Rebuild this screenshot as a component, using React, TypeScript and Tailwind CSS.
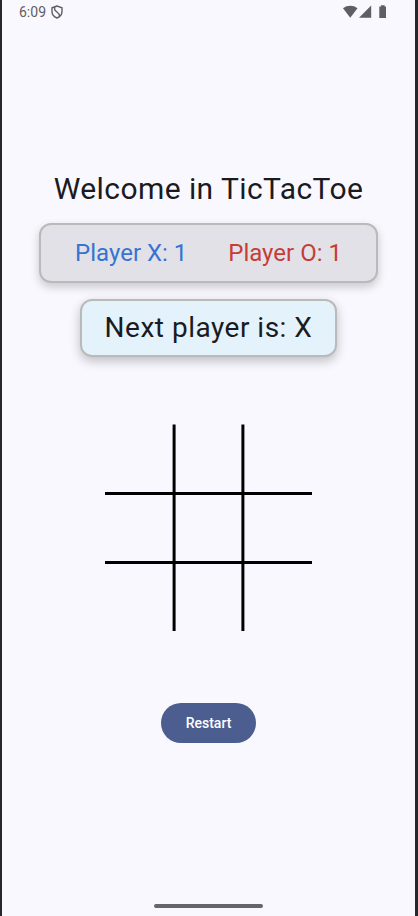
function StatusBar() {
  return (
    <div className="flex h-6 items-center justify-between pr-[28px] pl-[17px] text-[#5f5e62]">
      <div className="flex items-center gap-[5px]">
        <span className="text-[14px] leading-6">6:09</span>
        <svg width="12" height="14" viewBox="0 0 12 14" fill="none" stroke="currentColor" strokeWidth="1.4">
          <path d="M6 1 1 2.8v3.7c0 3 2 5.4 5 6.500 3-1.100 5-3.500 5-6.500V2.800z" />
          <path d="M3.600 2v2.200c0 1.800 4.800 4 4.800 6v1.300" />
        </svg>
      </div>
      <svg width="44" height="14" viewBox="0 0 44 14" fill="currentColor">
        <path d="M0 3.200C4-.1 10.500-.1 14.500 3.200L7.250 12.700z" />
        <path d="M28.200 0.500v12.200H16z" />
        <path d="M38 0.200h3.600v1.300H43v11.500h-6.700V1.500H38z" />
      </svg>
    </div>
  );
}

function Board() {
  return (
    <svg className="mt-[67px] block" width="207" height="207" viewBox="0 0 207 207">
      <path d="M69.100 .4V207M137.900 .4V207M0 69.500h207M0 138.500h207" stroke="#000" strokeWidth="3" />
    </svg>
  );
}

export default function App() {
  return (
    <div className="h-[916px] w-[418px] overflow-hidden border-r-[3px] border-l-2 border-[#27282c] bg-[#faf8ff] font-['Roboto',sans-serif] text-[#1a1b21]">
      <StatusBar />
      <main className="flex h-[880px] flex-col items-center pt-[147px]">
        <h1 className="h-[36px] text-[30px] leading-[36px] tracking-[0.42px] whitespace-nowrap">Welcome in TicTacToe</h1>
        <section className="mt-4 flex h-[60px] w-[339px] items-center justify-center gap-[41px] rounded-[12px] border-2 border-[#bababa] bg-[#e2e1e8] text-[24px] whitespace-nowrap shadow-[0_4px_10px_rgba(0,0,0,0.2)]">
          <span className="text-[#3674d0]">Player X: 1</span>
          <span className="text-[#c63c36]">Player O: 1</span>
        </section>
        <section className="mt-4 flex h-[58px] w-[257px] items-center justify-center rounded-[12px] border-[2.500px] border-[#bababa] bg-[#e4f2fc] text-[28px] tracking-[0.5px] whitespace-nowrap shadow-[0_4px_11px_rgba(0,0,0,0.24)]">
          Next player is: X
        </section>
        <Board />
        <button className="mt-[72px] h-10 w-[95px] shrink-0 rounded-full bg-[#4c5d90] text-[14px] font-medium text-white">Restart</button>
        <div className="mt-auto mb-[-4px] h-1 w-[109px] rounded-full bg-[#666569]" />
      </main>
    </div>
  );
}
